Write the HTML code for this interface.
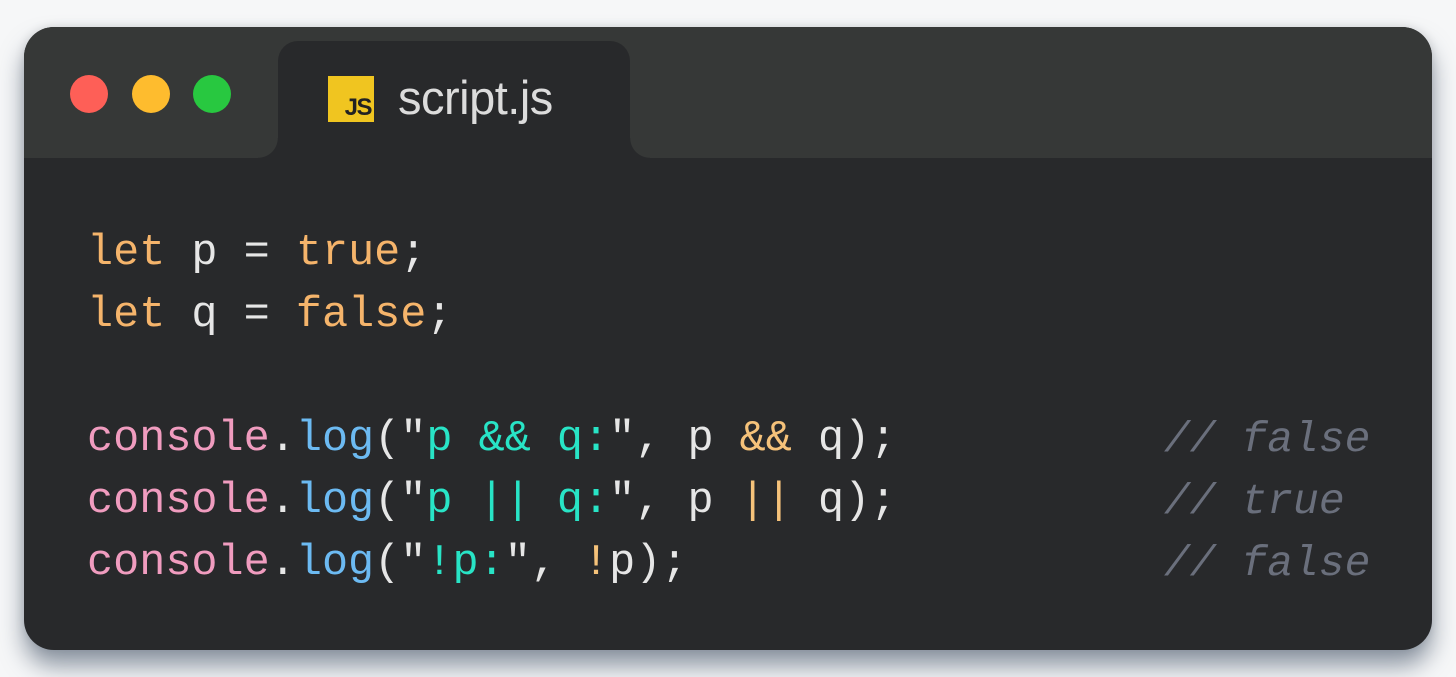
<!DOCTYPE html>
<html><head><style>
html,body{margin:0;padding:0;width:1456px;height:677px;background:#f6f7f8;overflow:hidden}
.win{position:absolute;left:24px;top:27px;width:1408px;height:623px;border-radius:30px;background:#28292b;overflow:hidden;box-shadow:0 16px 24px rgba(70,85,105,.6),0 0 10px rgba(0,0,0,.12)}
.bar{position:absolute;left:0;top:0;width:1408px;height:131px;background:#363837}
.dot{position:absolute;top:48px;width:38px;height:38px;border-radius:50%}
.tab{position:absolute;left:254px;top:14px;width:352px;height:117px;background:#28292b;border-radius:20px 20px 0 0}
.tab:before,.tab:after{content:"";position:absolute;bottom:0;width:20px;height:20px;background:radial-gradient(circle at 0 0,transparent 19.5px,#28292b 20px)}
.tab:before{left:-20px}
.tab:after{right:-20px;background:radial-gradient(circle at 100% 0,transparent 19.5px,#28292b 20px)}
.js{position:absolute;left:50px;top:35px;width:46px;height:46px;background:#f0c520}
.js span{position:absolute;right:3px;bottom:0px;font:bold 24px "Liberation Sans",sans-serif;color:#222;letter-spacing:-1.5px}
.title{position:absolute;left:120px;top:29px;font:47px "Liberation Sans",sans-serif;color:#dcdcdc;letter-spacing:-0.5px}
pre{position:absolute;left:63px;margin:0;font:43.5px "Liberation Mono","DejaVu Sans Mono",monospace;color:#e6e6e6;white-space:pre;line-height:62px}
.k{color:#f5b46b}.c{color:#f09cbf}.l{color:#6cbaf2}.s{color:#28e4c6}.o{color:#f5c27a}
.cm{position:absolute;left:1140px;font:italic 43px "Liberation Mono","DejaVu Sans Mono",monospace;color:#6a6f7c;line-height:62px;white-space:pre}
</style></head><body>
<div class="win">
<div class="bar"></div>
<div class="dot" style="left:46px;background:#fe5f57"></div>
<div class="dot" style="left:108px;background:#febc2e"></div>
<div class="dot" style="left:169px;background:#28c840"></div>
<div class="tab"><div class="js"><span>JS</span></div><div class="title">script.js</div></div>
<pre style="top:196px"><span class="k">let</span> p = <span class="k">true</span>;
<span class="k">let</span> q = <span class="k">false</span>;

<span class="c">console</span>.<span class="l">log</span>("<span class="s">p &amp;&amp; q:</span>", p <span class="o">&amp;&amp;</span> q);
<span class="c">console</span>.<span class="l">log</span>("<span class="s">p || q:</span>", p <span class="o">||</span> q);
<span class="c">console</span>.<span class="l">log</span>("<span class="s">!p:</span>", <span class="o">!</span>p);</pre>
<div class="cm" style="top:382px">// false
// true
// false</div>
</div>
</body></html>
